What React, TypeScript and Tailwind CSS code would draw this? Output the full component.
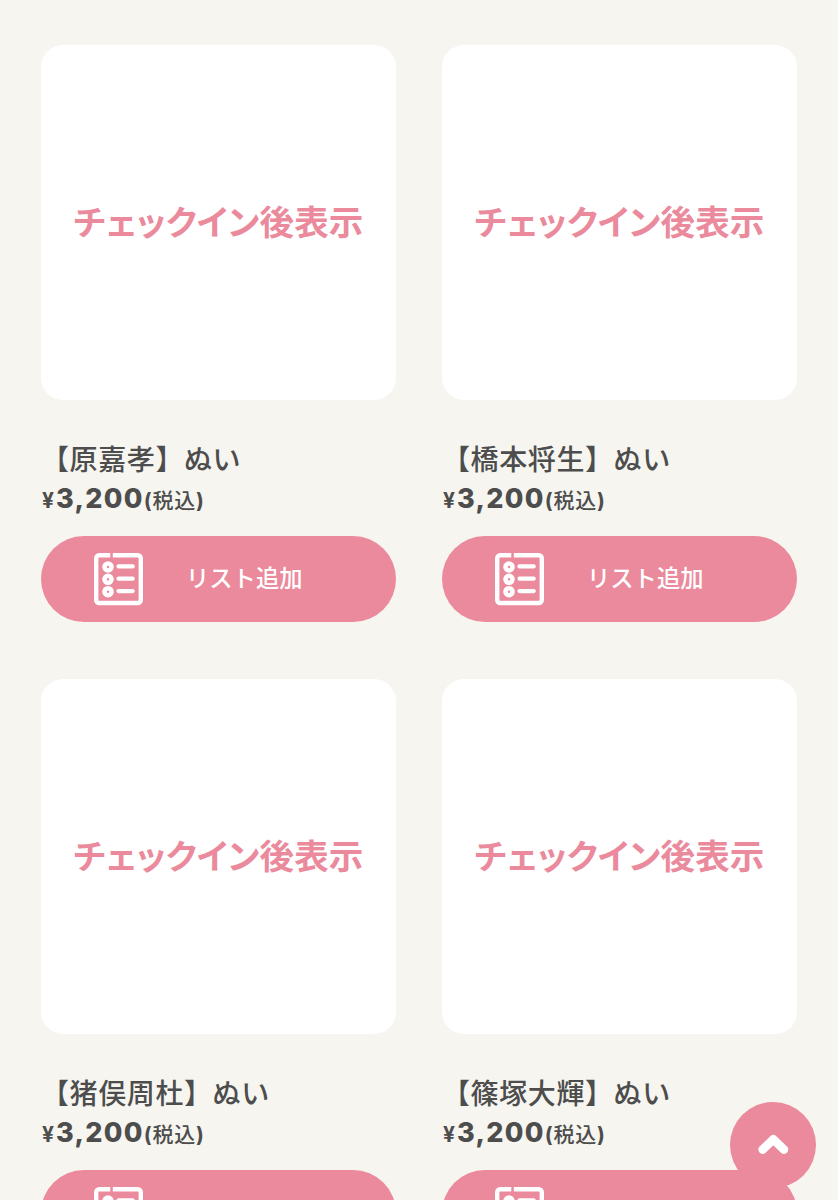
type Product = {
    id: number;
    name: string;
    price: string;
};

const products: Product[] = [
    { id: 1, name: "【原嘉孝】ぬい", price: "3,200" },
    { id: 2, name: "【橋本将生】ぬい", price: "3,200" },
    { id: 3, name: "【猪俣周杜】ぬい", price: "3,200" },
    { id: 4, name: "【篠塚大輝】ぬい", price: "3,200" },
];

function ListIcon() {
    return (
        <svg
            width="50"
            height="54"
            viewBox="0 0 50 54"
            fill="none"
            stroke="#fff"
            strokeWidth="4.4"
            strokeLinecap="round"
            strokeLinejoin="round"
        >
            <path
                d="M17.3 3.2H6.2a3 3 0 0 0-3 3V48a3 3 0 0 0 3 3H44.8a3 3 0 0 0 3-3V6.2a3 3 0 0 0-3-3H19.8"
                strokeLinecap="butt"
            />
            {[15, 27.3, 39.7].map((y) => (
                <g key={y}>
                    <circle cx="15" cy={y} r="3.5" strokeWidth="4.6" />
                    <path d={`M25.5 ${y - 0.6}h14.2`} strokeWidth="4.2" />
                </g>
            ))}
        </svg>
    );
}

function ProductCard({ product }: { product: Product }) {
    return (
        <div className="h-[634px]">
            <div className="flex h-[355px] items-center justify-center rounded-[22px] bg-white pb-1">
                <span className="text-[34.5px] leading-none font-bold tracking-[0.15px] whitespace-nowrap text-[#ea8a9c] [font-feature-settings:'palt']">
                    チェックイン後表示
                </span>
            </div>
            <h2 className="mt-[38px] text-[28px] leading-[40px] font-medium tracking-[0.6px] whitespace-nowrap">
                {product.name}
            </h2>
            <p className="flex h-[40px] items-baseline pt-px pl-px font-['Inter','Noto_Sans_CJK_JP',sans-serif] text-[21px] leading-[40px] font-bold whitespace-nowrap">
                <span className="mr-[2px]">¥</span>
                <span className="text-[27px] font-extrabold tracking-[1.3px]">{product.price}</span>
                <span className="tracking-[0.8px]">
                    (<span className="font-medium">税込</span>)
                </span>
            </p>
            <button
                type="button"
                className="mt-[18px] flex h-[86px] w-full items-center rounded-full bg-[#ea8a9c] pl-[52px] text-[23.3px] font-medium text-white"
            >
                <ListIcon />
                <span className="ml-[43px] pb-[3px] leading-none">リスト追加</span>
            </button>
        </div>
    );
}

export default function App() {
    return (
        <main className="relative h-[1200px] w-[838px] overflow-hidden bg-[#f6f5f0] px-[41px] pt-[45px] font-['Noto_Sans_CJK_JP',sans-serif] text-[#4d4d4d]">
            <div className="grid grid-cols-2 gap-x-[46px]">
                {products.map((product) => (
                    <ProductCard key={product.id} product={product} />
                ))}
            </div>
            <button
                type="button"
                aria-label="ページトップへ"
                className="absolute top-[1102px] left-[730px] flex size-[86px] items-center justify-center rounded-full bg-[#ea8a9c] text-white"
            >
                <svg
                    width="32"
                    height="22"
                    viewBox="0 0 32 22"
                    fill="none"
                    stroke="currentColor"
                    strokeWidth="8.6"
                    strokeLinecap="round"
                    strokeLinejoin="round"
                >
                    <path d="M5.6 15.6 16.3 5.3l10.7 10.3" />
                </svg>
            </button>
        </main>
    );
}
